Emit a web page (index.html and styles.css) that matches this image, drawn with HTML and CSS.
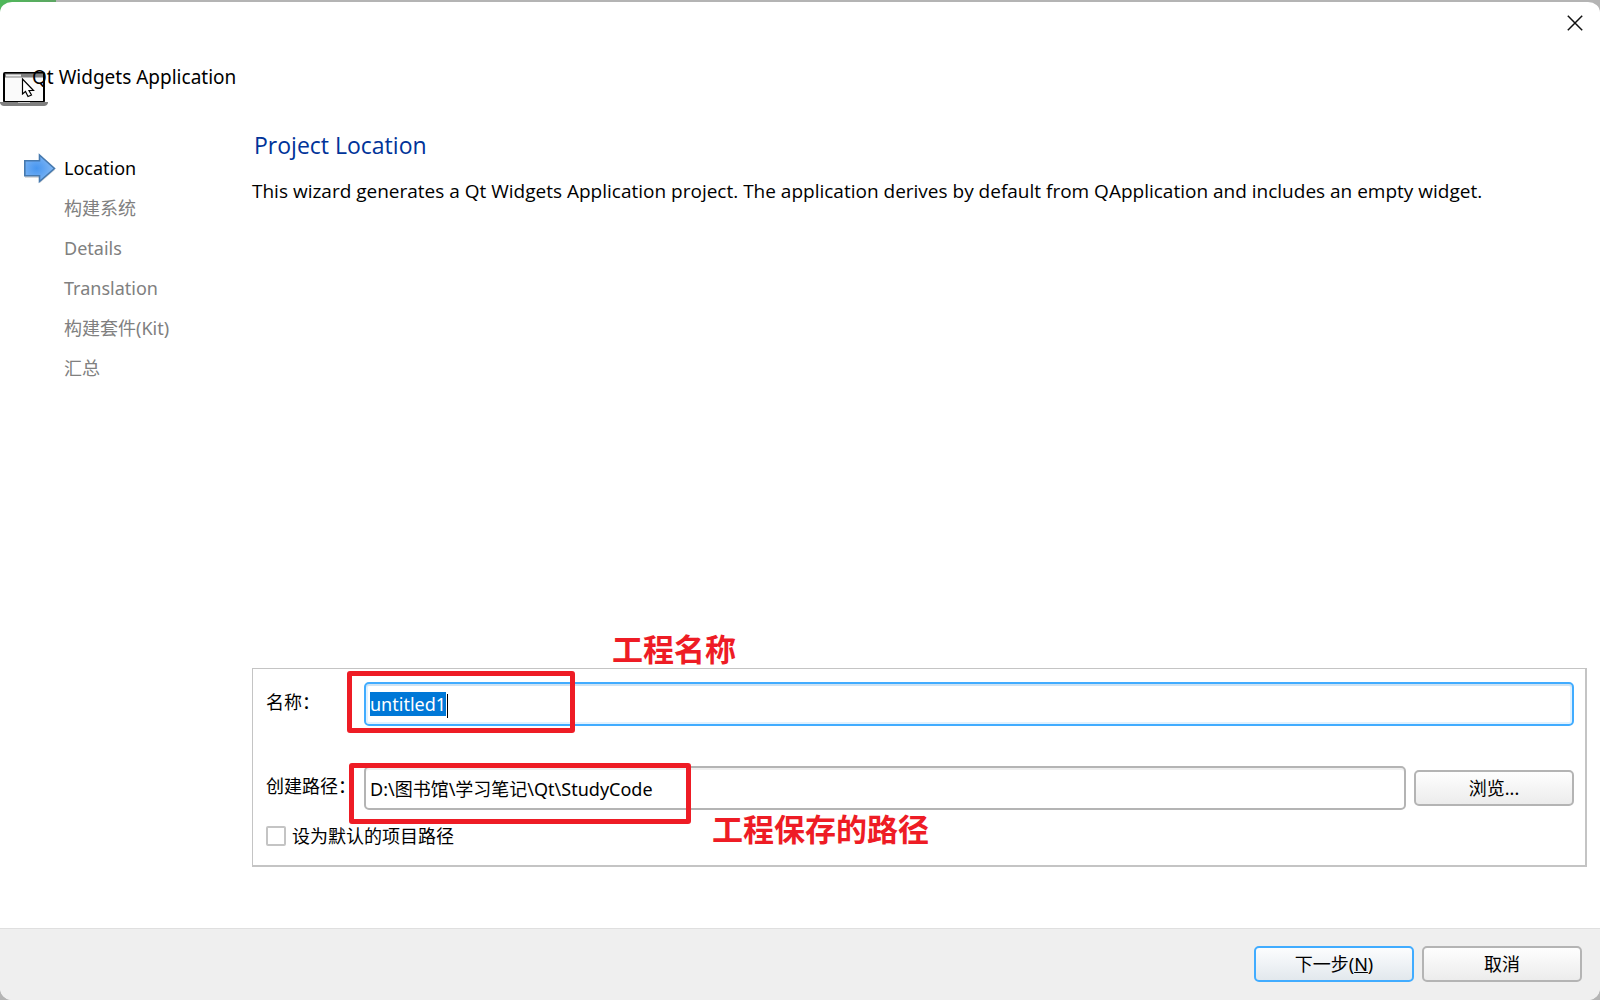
FILE: index.html
```html
<!DOCTYPE html>
<html lang="zh-CN">
<head>
<meta charset="utf-8">
<title>Qt Widgets Application</title>
<link rel="stylesheet" href="styles.css">
</head>
<body>
<div class="dialog">
  <header class="titlebar">
    <button class="close" type="button" aria-label="关闭">
      <svg width="16" height="16" viewBox="0 0 16 16"><path d="M.8.8 15.2 15.2M15.2.8.8 15.2" stroke="#111" stroke-width="1.5" fill="none"/></svg>
    </button>
  </header>
  <div class="wizard-title">
    <svg class="app-icon" width="48" height="36" viewBox="0 0 48 36">
      <rect x="4" y="2" width="40" height="29" rx="1" fill="#fafafa" stroke="#000" stroke-width="2"/>
      <path d="M5 4.500H43" stroke="#808080" stroke-width="4"/>
      <path d="M6 4.500H21" stroke="#eee" stroke-width="2"/>
      <path d="M0 31H48V32Q47 35 44 35H4Q1 35 0 32Z" fill="#808080"/>
      <path d="M18 31.500H30" stroke="#ccc" stroke-width="1"/>
      <path d="M22.500 8V23L25.500 20.500L28 25.500L31.500 24L29 19.500H33.500Z" fill="#fff" stroke="#000" stroke-width="1.200"/>
    </svg>
    <span class="app-name">Qt Widgets Application</span>
  </div>
  <div class="content">
    <ol class="steps">
      <li class="step current">
        <svg width="32" height="32" viewBox="0 0 32 32">
          <defs>
            <radialGradient id="arrowFill" cx=".4" cy=".5" r=".6"><stop offset="0" stop-color="#4796f0"/><stop offset="1" stop-color="#83b8f4"/></radialGradient>
          </defs>
          <path d="M1 11H15V5L31 18L16 31V26H1Z" fill="#000" opacity=".14"/>
          <path d="M.8 8.800H15.500V3L30.500 16.500L15.500 29.500V23.800H.8Z" fill="url(#arrowFill)" stroke="#4679ae" stroke-width="1.600"/>
        </svg>
        <span>Location</span>
      </li>
      <li class="step">构建系统</li>
      <li class="step">Details</li>
      <li class="step">Translation</li>
      <li class="step">构建套件(Kit)</li>
      <li class="step">汇总</li>
    </ol>
    <main class="page">
      <h1 class="heading">Project Location</h1>
      <p class="description">This wizard generates a Qt Widgets Application project. The application derives by default from QApplication and includes an empty widget.</p>
      <form class="location">
        <div class="row">
          <label for="name">名称：</label>
          <input class="field" id="name" type="text" value="untitled1" autocomplete="off" spellcheck="false" autofocus>
        </div>
        <div class="row">
          <label for="path">创建路径：</label>
          <input class="field" id="path" type="text" value="D:\图书馆\学习笔记\Qt\StudyCode" autocomplete="off" spellcheck="false">
          <button class="button" type="button">浏览...</button>
        </div>
        <label class="default-path"><input class="check" type="checkbox">设为默认的项目路径</label>
        <span class="caret"></span>
        <span class="mark mark-name"></span>
        <span class="mark mark-path"></span>
        <strong class="note note-name">工程名称</strong>
        <strong class="note note-path">工程保存的路径</strong>
      </form>
    </main>
  </div>
  <footer class="footer">
    <button class="button primary" type="button">下一步(<u>N</u>)</button>
    <button class="button" type="button">取消</button>
  </footer>
</div>
<script src="script.js"></script>
</body>
</html>
```

FILE: styles.css
```css
* {
  box-sizing: border-box;
}

body {
  margin: 0;
  background: linear-gradient(90deg, #4fb85a, #5da663) 0 0 / 56px 12px no-repeat #b4b4b4;
  color: #000;
  font: 18px/24px "Noto Sans", "Noto Sans CJK SC", sans-serif;
}

button,
input {
  font: inherit;
  color: inherit;
}

.dialog {
  display: flex;
  flex-direction: column;
  min-height: 100vh;
  border-top: 2px solid transparent;
  border-radius: 12px;
  background: #fff padding-box;
  overflow: hidden;
}

.titlebar {
  display: flex;
  justify-content: flex-end;
  padding: 13px 17px 0;
}

.close {
  display: flex;
  padding: 0;
  border: 0;
  background: none;
}

.wizard-title {
  display: flex;
  padding-top: 34px;
  height: 87px;
}

.app-icon {
  flex: none;
  margin-top: 6px;
}

.app-name {
  margin-left: -16px;
  font-size: 19px;
}

.content {
  display: flex;
  flex: 1;
  padding: 13px 13px 61px 24px;
}

.steps {
  flex: none;
  width: 228px;
  margin: 0;
  padding: 17px 0 0;
  list-style: none;
  color: #808080;
}

.step {
  display: flex;
  align-items: center;
  height: 40px;
  padding-left: 40px;
}

.current {
  gap: 8px;
  padding-left: 0;
  color: #000;
}

.page {
  display: flex;
  flex: 1;
  flex-direction: column;
  min-width: 0;
}

.heading {
  margin: 0;
  padding-left: 2px;
  color: #003399;
  font-family: "Open Sans", "Noto Sans CJK SC", sans-serif;
  font-size: 23px;
  font-weight: 400;
  line-height: 28px;
}

.description {
  margin: 20px 0;
  font-family: "Open Sans", "Noto Sans CJK SC", sans-serif;
  font-size: 19px;
}

.location {
  position: relative;
  display: flex;
  flex-direction: column;
  gap: 40px;
  height: 199px;
  margin-top: auto;
  padding: 13px 11px 0 13px;
  border: solid #c4c4c4;
  border-width: 1px 2px 2px 1px;
}

.row {
  display: flex;
  align-items: center;
  gap: 8px;
  height: 44px;
}

.row label {
  width: 90px;
  padding-bottom: 4px;
  white-space: nowrap;
}

.field {
  flex: 1;
  min-width: 0;
  height: 44px;
  padding: 0 4px;
  border: 2px solid #b4b4b4;
  border-radius: 5px;
  outline: 0;
  background: #fff;
  box-shadow: inset 0 2px #f0f0f0;
}

#name {
  border-color: #41acff;
  box-shadow: inset 0 2px #cfe3f3, inset 0 0 0 2px #e2f2ff;
}

.field::selection {
  background: #0078d7;
  color: #fff;
}

.button {
  width: 160px;
  height: 36px;
  padding: 0;
  border: 2px solid #b4b4b4;
  border-radius: 5px;
  background: linear-gradient(#fefefe, #ececec);
}

.primary {
  border-color: #41acff;
  background: linear-gradient(#fcfdfe, #e2e8ed);
}

.default-path {
  display: flex;
  align-items: center;
  align-self: flex-start;
  gap: 6px;
  margin-top: -26px;
}

.check {
  appearance: none;
  width: 20px;
  height: 20px;
  margin: 0;
  border: 2px solid #c4c4c4;
  border-radius: 2px;
  background: #fff;
}

.caret {
  position: absolute;
  top: 25px;
  left: 194px;
  width: 1px;
  height: 24px;
  background: #000;
}

.mark {
  position: absolute;
  border: 5px solid #ee1c25;
  border-radius: 3px;
}

.mark-name {
  top: 2px;
  left: 94px;
  width: 228px;
  height: 62px;
}

.mark-path {
  top: 94px;
  left: 96px;
  width: 342px;
  height: 61px;
}

.note {
  position: absolute;
  color: #ee1c25;
  font-size: 31px;
  line-height: 40px;
  white-space: nowrap;
}

.note-name {
  top: -40px;
  left: 359px;
}

.note-path {
  top: 140px;
  left: 459px;
}

.footer {
  display: flex;
  justify-content: flex-end;
  gap: 8px;
  padding: 17px 18px 18px;
  border-top: 1px solid #dfdfdf;
  background: #efefef;
}
```

FILE: script.js
```js
const nameField = document.getElementById("name");
nameField.focus();
nameField.select();
```
